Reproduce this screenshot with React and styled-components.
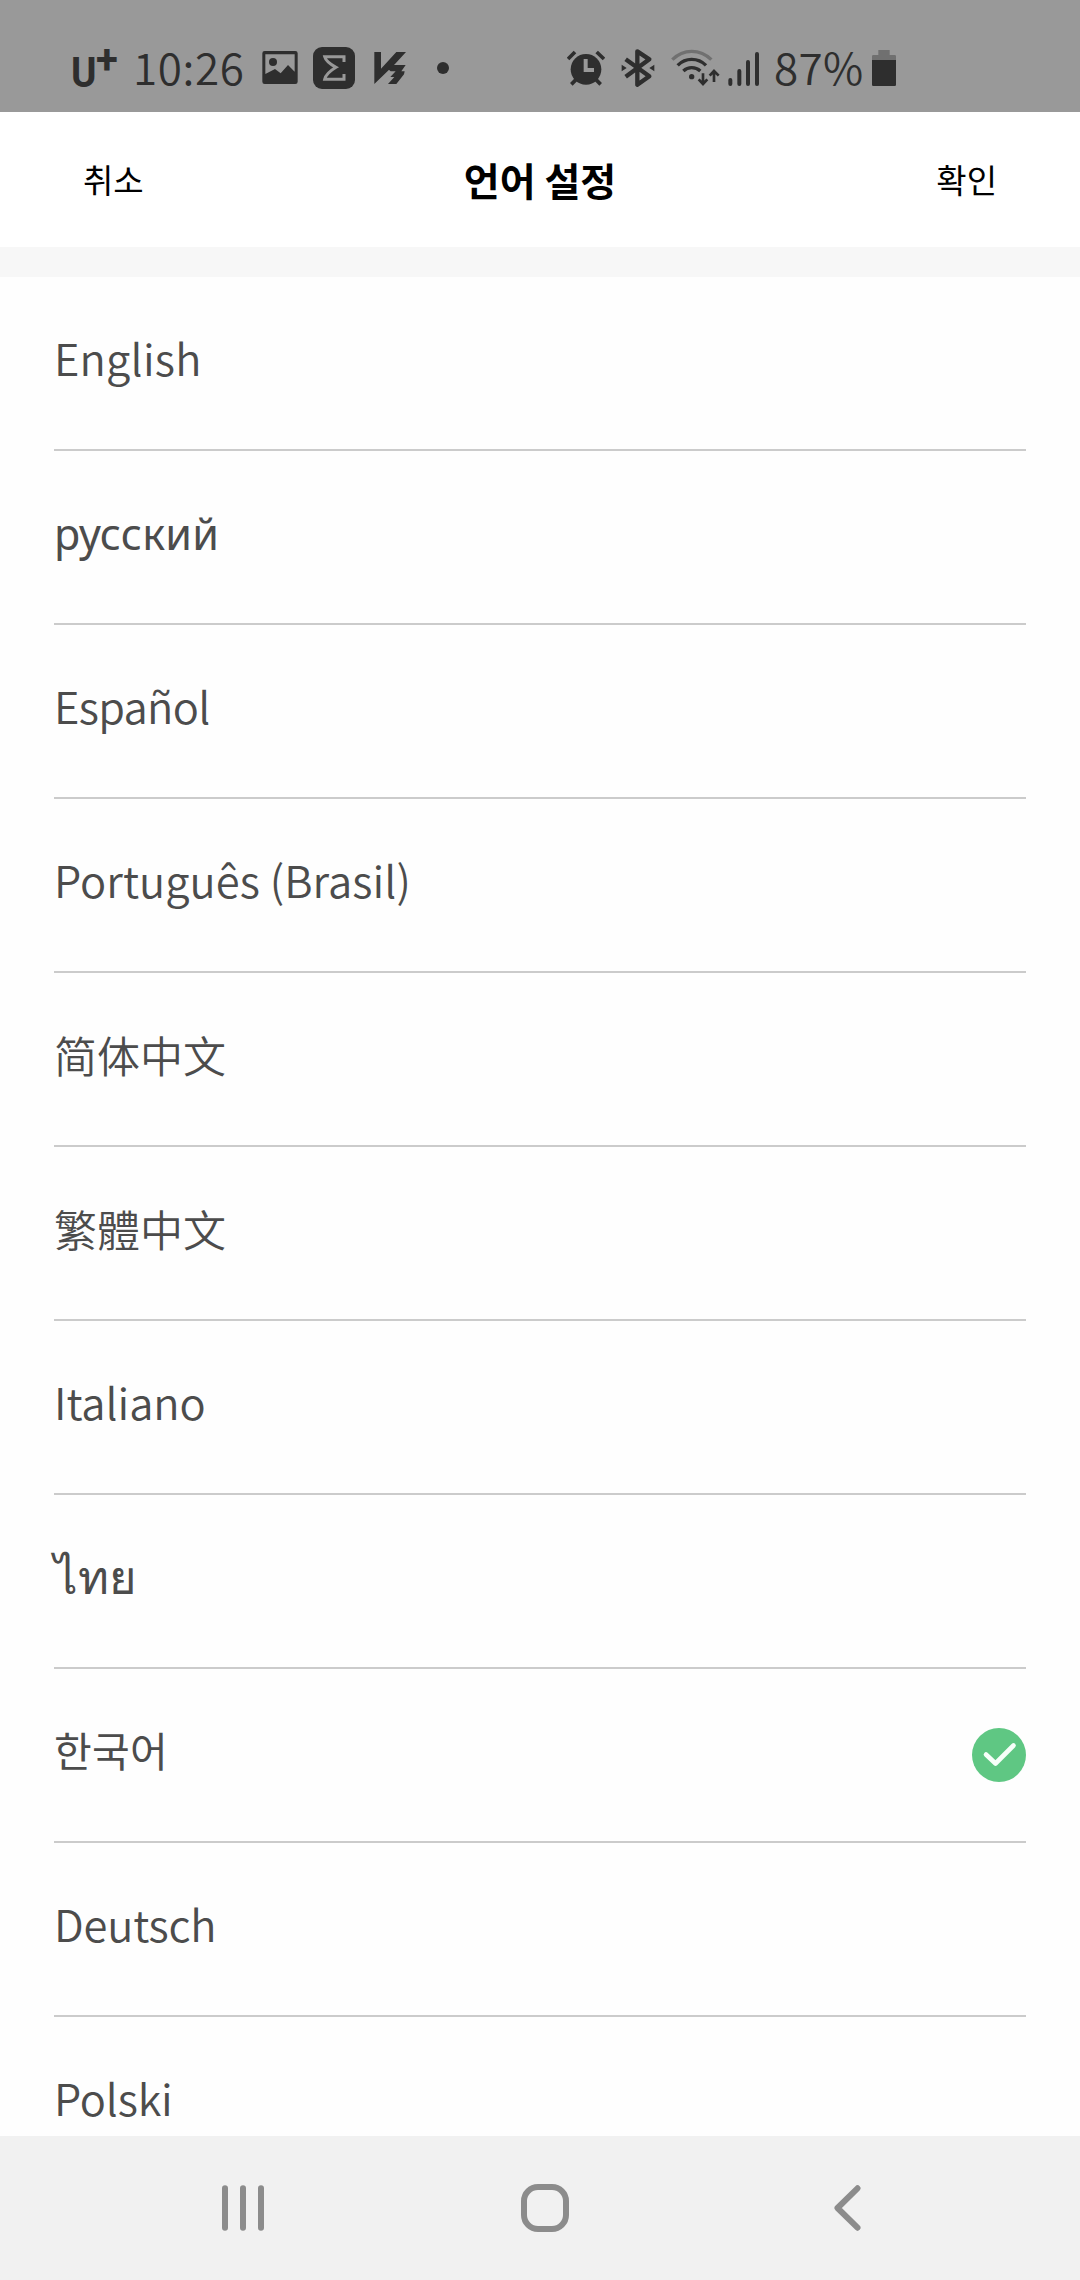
import React from "react";
import styled, { createGlobalStyle } from "styled-components";

const GlobalStyle = createGlobalStyle`
  * { box-sizing: border-box; }
  body { margin: 0; background: #fefefe; }
`;

const Screen = styled.div`
  display: flex;
  flex-direction: column;
  width: 1080px;
  height: 2280px;
  overflow: hidden;
  background: #fefefe;
  font-family: "Noto Sans CJK KR", "Noto Sans", sans-serif;
`;

const StatusBar = styled.div`
  flex: none;
  display: flex;
  align-items: center;
  height: 112px;
  padding: 24px 184px 0 72px;
  background: #999999;
  color: #2e2e2e;
`;

const StatusGroup = styled.div`
  display: flex;
  align-items: center;
  height: 42px;
  gap: ${(p) => p.$gap}px;
  margin-left: ${(p) => p.$push || "0"};
`;

const Carrier = styled.div`
  display: flex;
  align-items: flex-start;
  width: 46px;
  height: 42px;
  font-family: Roboto, sans-serif;
  font-weight: 700;
`;

const CarrierLetter = styled.span`
  font-size: 43px;
  line-height: 50px;
  width: 25px;
  transform: scaleX(0.9);
  transform-origin: 0 50%;
  margin-left: -1px;
`;

const CarrierPlus = styled.span`
  font-size: 40px;
  font-weight: 700;
  line-height: 26px;
`;

const StatusText = styled.div`
  width: ${(p) => p.$width}px;
  height: 46px;
  font-size: 44px;
  font-weight: 350;
  line-height: 42px;
  letter-spacing: ${(p) => p.$spacing || 0}px;
  text-indent: ${(p) => p.$indent || 0}px;
  white-space: nowrap;
`;

const Icon = styled.svg`
  display: block;
  flex: none;
`;

const Header = styled.header`
  flex: none;
  display: flex;
  align-items: center;
  justify-content: space-between;
  height: 135px;
  padding: 0 83px;
  background: #ffffff;
  color: #000000;
`;

const HeaderButton = styled.button`
  padding: 0 0 2px;
  border: 0;
  background: none;
  color: inherit;
  font: 400 33px/48px "Noto Sans CJK KR", sans-serif;
`;

const Title = styled.h1`
  margin: 0;
  padding-bottom: 2px;
  font-size: 39px;
  font-weight: 700;
  line-height: 56px;
`;

const Separator = styled.div`
  flex: none;
  height: 30px;
  background: #f7f7f7;
`;

const LanguageList = styled.ul`
  flex: 1;
  min-height: 0;
  margin: 0;
  padding: 0 54px;
  overflow: hidden;
  list-style: none;
`;

const LanguageRow = styled.li`
  display: flex;
  align-items: center;
  justify-content: space-between;
  height: 174px;
  border-bottom: 2px solid #cbcbcb;
  color: #4c4c4c;
`;

const LanguageName = styled.span`
  font-family: ${(p) => p.$font || '"Noto Sans CJK KR"'}, "Noto Sans", sans-serif;
  font-size: ${(p) => p.$size || 43.5}px;
  font-weight: ${(p) => p.$weight || 350};
  line-height: 64px;
  letter-spacing: ${(p) => p.$spacing || 0}px;
  padding-bottom: ${(p) => p.$lift || 10}px;
`;

const NavBar = styled.nav`
  flex: none;
  display: flex;
  align-items: center;
  gap: 257px;
  height: 144px;
  padding: 0 0 0 222px;
  background: #f1f1f1;
  color: #8c8c8c;
`;

const languages = [
  { name: "English", spacing: 0.2 },
  { name: "русский", font: '"Noto Sans"', size: 43, weight: 400, spacing: 0.2, lift: 7 },
  { name: "Español", spacing: -0.7 },
  { name: "Português (Brasil)", spacing: 0.05 },
  { name: "简体中文", font: '"Noto Sans CJK SC"', size: 43, lift: 11 },
  { name: "繁體中文", font: '"Noto Sans CJK TC"', size: 43, lift: 11 },
  { name: "Italiano", spacing: -0.1 },
  { name: "ไทย", size: 47, weight: 300, lift: 15 },
  { name: "한국어", size: 41, weight: 400, spacing: 0.3, lift: 12, selected: true },
  { name: "Deutsch", spacing: -0.2 },
  { name: "Polski", spacing: -0.2 },
];

const PictureIcon = () => (
  <Icon width="36" height="42" viewBox="636 51 108 126">
    <path fill="currentColor" fillRule="evenodd" d="M644 63H736Q743 63 743 70V155Q743 162 736 162H644Q637 162 637 155V70Q637 63 644 63ZM646 73V132L675 117L692 130L714 105L734 125V73Z" />
    <circle cx="669" cy="96" r="12" fill="currentColor" />
  </Icon>
);

const SigmaIcon = () => (
  <Icon width="42" height="42" viewBox="789 51 126 126">
    <rect x="789" y="51" width="126" height="126" rx="27" fill="currentColor" />
    <path fill="none" stroke="#999999" strokeWidth="9" d="M882 96V80H824Q828 96 858 112Q828 130 824 148H882V132" />
  </Icon>
);

const VaccineIcon = () => (
  <Icon width="34" height="42" viewBox="971 51 102 126">
    <path fill="currentColor" d="M972 66H992V116L1038 66H1067L1034 102L972 162Z" />
    <path fill="currentColor" d="M1040 92L1024 105H1066L1053 124H1063L1061 133L1038 162H1013L1032 141H1020L1036 124H1021L1012 116Z" />
  </Icon>
);

const DotIcon = () => (
  <Icon width="12" height="42" viewBox="1158 51 36 126">
    <circle cx="1176" cy="114" r="18" fill="currentColor" />
  </Icon>
);

const AlarmIcon = () => (
  <Icon width="38" height="42" viewBox="81 51 114 126">
    <circle cx="138" cy="118" r="46" fill="currentColor" />
    <path stroke="currentColor" strokeWidth="11" d="M84 87L105 66M192 87L170 66M94 163L108 149M182 163L168 149" />
    <path fill="none" stroke="#999999" strokeWidth="12" d="M137 87V120H162" />
  </Icon>
);

const BluetoothIcon = () => (
  <Icon width="34" height="42" viewBox="245 51 102 126">
    <path fill="none" stroke="currentColor" strokeWidth="13" strokeLinejoin="round" d="M259 88L330 139L294 164V64L330 88L259 140" />
    <path fill="currentColor" d="M247 104L262 114L247 124ZM345 104L330 114L345 124Z" />
  </Icon>
);

const WifiIcon = () => (
  <Icon width="49" height="42" viewBox="392 51 147 126">
    <g fill="none" stroke="currentColor" strokeWidth="10">
      <path stroke="#707070" d="M396 89Q421 64 454 64Q488 64 513 89" />
      <path d="M412 106Q430 88 454 88Q479 88 497 106" />
      <path d="M429 123Q440 113 454 113Q469 113 480 123" />
      <path strokeWidth="8" d="M488 130V162M475 148L488 162L501 148M521 156V123M508 137L521 123L535 137" />
    </g>
    <circle cx="454" cy="140" r="8" fill="currentColor" />
  </Icon>
);

const SignalIcon = () => (
  <Icon width="32" height="42" viewBox="565 51 96 126">
    <path stroke="currentColor" strokeWidth="12" strokeLinecap="round" d="M572 150V162M599 123V162M625 96V162M652 72V162" />
  </Icon>
);

const BatteryIcon = () => (
  <Icon width="24" height="42" viewBox="996 51 72 126">
    <path fill="#707070" d="M1015 60H1049V75H1064Q1068 75 1068 79V91H996V79Q996 75 1000 75H1015Z" />
    <path fill="currentColor" d="M996 90H1068V164Q1068 168 1064 168H1000Q996 168 996 164Z" />
  </Icon>
);

const CheckIcon = () => (
  <Icon width="54" height="54" viewBox="0 0 54 54">
    <circle cx="27" cy="27" r="27" fill="#5fc783" />
    <path fill="none" stroke="#f7fff9" strokeWidth="4.6" strokeLinecap="round" strokeLinejoin="round" d="M14 26.5L23.5 35.5L41.5 17.5" />
  </Icon>
);

const RecentsIcon = () => (
  <Icon width="42" height="48" viewBox="0 0 42 48">
    <path stroke="currentColor" strokeWidth="6" strokeLinecap="round" d="M3 4.3V43.7M21 4.3V43.7M39 4.3V43.7" />
  </Icon>
);

const HomeIcon = () => (
  <Icon width="48" height="48" viewBox="0 0 48 48">
    <rect x="3" y="3" width="42" height="42" rx="14" fill="none" stroke="currentColor" strokeWidth="6" />
  </Icon>
);

const BackIcon = () => (
  <Icon width="35" height="48" viewBox="0 0 35 48">
    <path fill="none" stroke="currentColor" strokeWidth="6" strokeLinecap="round" strokeLinejoin="round" d="M31.5 4.3L11.5 24L31.5 43.7" />
  </Icon>
);

export default function App() {
  return (
    <Screen>
      <GlobalStyle />
      <StatusBar>
        <StatusGroup $gap={16}>
          <Carrier>
            <CarrierLetter>U</CarrierLetter>
            <CarrierPlus>+</CarrierPlus>
          </Carrier>
          <StatusText $width={112} $spacing={0.6} $indent={-1}>10:26</StatusText>
        </StatusGroup>
        <StatusGroup $gap={15} $push="16px">
          <PictureIcon />
          <SigmaIcon />
        </StatusGroup>
        <StatusGroup $gap={29} $push="19px">
          <VaccineIcon />
          <DotIcon />
        </StatusGroup>
        <StatusGroup $gap={16} $push="auto">
          <AlarmIcon />
          <BluetoothIcon />
          <WifiIcon />
        </StatusGroup>
        <StatusGroup $gap={14} $push="8px">
          <SignalIcon />
          <StatusText $width={84} $spacing={0.4}>87%</StatusText>
          <BatteryIcon />
        </StatusGroup>
      </StatusBar>
      <Header>
        <HeaderButton>취소</HeaderButton>
        <Title>언어 설정</Title>
        <HeaderButton>확인</HeaderButton>
      </Header>
      <Separator />
      <LanguageList>
        {languages.map((l) => (
          <LanguageRow key={l.name}>
            <LanguageName
              $font={l.font}
              $size={l.size}
              $weight={l.weight}
              $spacing={l.spacing}
              $lift={l.lift}
            >
              {l.name}
            </LanguageName>
            {l.selected && <CheckIcon />}
          </LanguageRow>
        ))}
      </LanguageList>
      <NavBar>
        <RecentsIcon />
        <HomeIcon />
        <BackIcon />
      </NavBar>
    </Screen>
  );
}
